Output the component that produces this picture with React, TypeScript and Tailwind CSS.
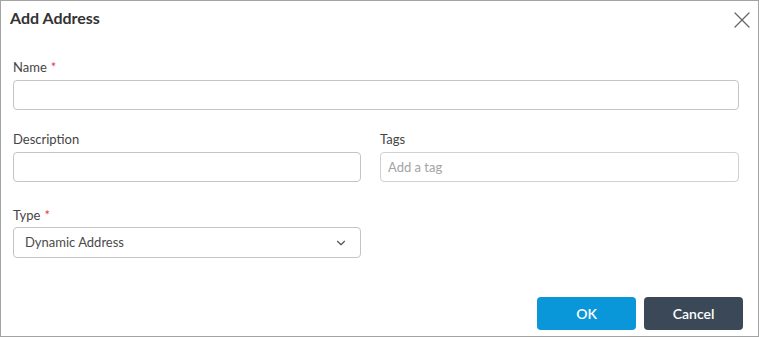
import { ChevronDown, X } from "lucide-react";

const font = { fontFamily: "Lato, 'Open Sans', Arial, sans-serif" };

function Label({ text, required }: { text: string; required?: boolean }) {
  return (
    <label className="block h-4 text-[13px] leading-4 text-[#454545]">
      {text}
      {required ? <span className="ml-[4px] text-[#e4384b]">*</span> : null}
    </label>
  );
}

export default function App() {
  return (
    <div style={font} className="h-[337px] w-[759px] border border-[#a3a3a3] bg-white">
      <div className="flex h-[35px] items-start justify-between pl-[9px] pr-[2px] pt-[7px]">
        <h2 className="text-[16px] font-bold leading-5 text-[#333]">Add Address</h2>
        <button className="-mt-[2px] text-[#666]" aria-label="Close">
          <X size={28} strokeWidth={1.1} />
        </button>
      </div>

      <div className="pl-[12px] pr-[19px] pt-[23px]">
        <Label text="Name" required />
        <input className="mt-[5px] block h-[30px] w-full rounded-[4px] border border-[#c4c4c4] outline-none" />

        <div className="mt-[21px] flex gap-[19px]">
          <div className="w-[348px]">
            <Label text="Description" />
            <input className="mt-[5px] block h-[30px] w-full rounded-[4px] border border-[#c4c4c4] outline-none" />
          </div>
          <div className="flex-1">
            <Label text="Tags" />
            <input
              placeholder="Add a tag"
              className="mt-[5px] block h-[30px] w-full rounded-[4px] border border-[#d0d0d0] px-[7px] text-[13px] text-[#333] outline-none placeholder:text-[#a3a3a3]"
            />
          </div>
        </div>

        <div className="mt-[25px] w-[348px]">
          <Label text="Type" required />
          <div className="mt-[4px] flex h-[31px] items-center justify-between rounded-[4px] border border-[#c4c4c4] pl-[11px] pr-[12px] text-[13px] text-[#4a4a4a]">
            <span>Dynamic Address</span>
            <ChevronDown size={14} strokeWidth={2} className="text-[#555]" />
          </div>
        </div>
      </div>

      <div className="mt-[39px] flex justify-end gap-[8px] pr-[15px]">
        <button className="h-[33px] w-[99px] rounded-[4px] bg-[#0a97d9] text-[14px] font-semibold text-white">
          OK
        </button>
        <button className="h-[33px] w-[99px] rounded-[4px] bg-[#3b4857] text-[14px] font-semibold text-white">
          Cancel
        </button>
      </div>
    </div>
  );
}
